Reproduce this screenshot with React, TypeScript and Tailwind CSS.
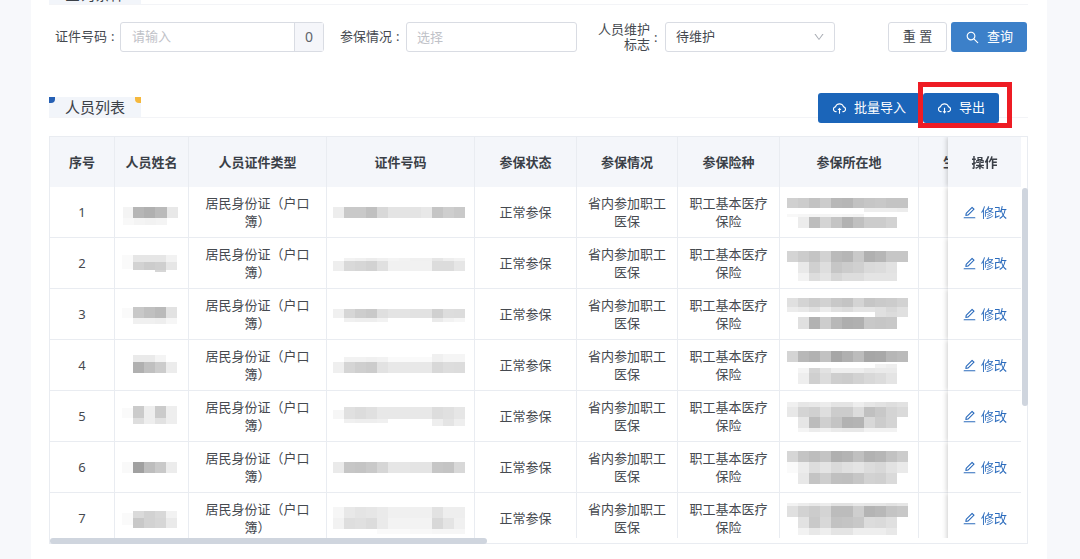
import type { ReactNode } from 'react'
import {
  AiOutlineCloudDownload,
  AiOutlineCloudUpload,
  AiOutlineDown,
  AiOutlineEdit,
  AiOutlineSearch,
} from 'react-icons/ai'

// x, y, height and the grey level of every 11px block
type Strip = [number, number, number, string]

interface Person {
  id: number
  name: Strip[]
  certNo: Strip[]
  area: Strip[]
}

const BLOCK = 11

const people: Person[] = [
  {
    id: 1,
    name: [[5, 17, 11, 'f4 b6 b0 ba e8'], [15, 17, 11, 'b6 b0 ba'], [5, 28, 7, 'f8 f4 f2 f4']],
    certNo: [[2, 17, 11, 'ed c9 c9 c0 d8 e4 e4 e4 e8 c5 ce c9']],
    area: [
      [5, 8, 10, 'd0 cc c2 cc b8 b6 c2 c6 c8 c4 c4'],
      [82, 18, 4, 'ee ee ee ec'],
      [5, 24, 3, 'f8 f6 f4 f4 f6 f4 f2'],
      [16, 27, 11, 'ec bd d4 c4 b2 c0 cc cc d2'],
    ],
  },
  {
    id: 2,
    name: [[4, 14, 14, 'fa'], [15, 14, 7, 'e6 e6 e6 f2'], [15, 21, 8, 'd2 cc cf e6'], [37, 29, 2, 'd6']],
    certNo: [
      [13, 17, 3, 'f2 f0 ec f0 f4 f2 f0 f0 e6 ee f2'],
      [2, 20, 10, 'ee d9 d6 d2 e0 f1 f1 f1 f1 dc dc e6'],
    ],
    area: [
      [5, 10, 11, 'd4 cc c4 d2 ba b6 c9 b0 b6 c6 c6'],
      [16, 21, 11, 'e9 d0 de c6 cc d0 da dc e2'],
      [16, 32, 8, 'f2 dd e4 d6 dd dd e4 e4 e4'],
    ],
  },
  {
    id: 3,
    name: [[4, 16, 10, 'fa'], [15, 15, 11, 'c8 c0 ba e2'], [15, 26, 6, 'f0 f0 ee f6']],
    certNo: [
      [2, 17, 9, 'f0 d6 cd c9 df e4 e4 e2 e2 d0 dd dc'],
      [13, 26, 4, 'f0 ee ee f2'],
      [101, 26, 4, 'ea f2 f6'],
    ],
    area: [
      [5, 6, 9, 'e0 d4 cc d2 c8 c4 d4 c6 ca cc d2'],
      [5, 15, 5, 'ec e8 e0 ec e0 dc e4 e4 e0 d8 e0'],
      [93, 20, 5, 'e0 dc e0'],
      [16, 25, 12, 'e0 b2 cd b8 ae b0 c8 c6 c8'],
    ],
  },
  {
    id: 4,
    name: [[15, 12, 7, 'ea ea f4'], [15, 19, 11, 'b0 c0 cc ec']],
    certNo: [
      [13, 14, 5, 'f2 f2 f0 f2 fa fa fa fa'],
      [101, 11, 8, 'f0 f5 f5'],
      [2, 19, 11, 'ef d5 cf cc e2 e8 e8 e8 e8 d8 dd dc'],
    ],
    area: [
      [5, 8, 11, 'd4 b8 b2 c2 a6 b0 bc a6 a8 b6 ba'],
      [93, 21, 5, 'f2 ee'],
      [16, 25, 5, 'f4 d4 e2 ee ee ee e8 ea ea'],
      [16, 30, 11, 'ee cf dc ce cc d2 d8 dc e4'],
    ],
  },
  {
    id: 5,
    name: [[4, 14, 10, 'fa'], [15, 12, 12, 'cb ee cb ee'], [15, 24, 6, 'de ee e2 ee']],
    certNo: [
      [2, 16, 9, 'f6'],
      [13, 13, 12, 'e0 dc e0 e8 e8 e8 e8 e8 dd e0 e6'],
      [13, 25, 4, 'f0 ee ee f0'],
      [101, 25, 7, 'ee e4 ee'],
    ],
    area: [
      [5, 8, 5, 'f0 e6 e8 ec e4 e4 ee e6 e2 de e2'],
      [5, 13, 10, 'e8 d4 d0 de cc cc dc c0 c8 d4 da'],
      [16, 23, 11, 'e6 bc cf c4 b2 b4 d8 cc d4'],
      [16, 34, 4, 'f4 ec f0 ea e8 e8 f2 f2 f2'],
    ],
  },
  {
    id: 6,
    name: [[4, 17, 11, 'f9'], [15, 17, 11, 'a0 bd c9 ec']],
    certNo: [[2, 17, 11, 'ea c6 c4 c9 d6 e6 e6 e4 e4 c6 c4 d8']],
    area: [
      [5, 6, 11, 'd6 c4 bd c4 b0 b4 c0 b2 b6 c2 cc'],
      [5, 17, 11, 'fa ec dd e4 da e0 e4 dc d8 e2 ea'],
      [16, 28, 11, 'e8 c4 ce c0 bf c6 d2 d0 da'],
    ],
  },
  {
    id: 7,
    name: [[4, 17, 12, 'fa'], [15, 15, 7, 'da d2 d8 f2'], [15, 22, 10, 'c8 d2 d6 ea']],
    certNo: [
      [2, 11, 11, 'f6 e8 e4 e6 ea f0 f0 f0 f0 e2 ee ee'],
      [2, 22, 11, 'f2 de e0 dc ea f3 f3 f3 f3 d8 e4 f0'],
      [46, 33, 5, 'fa fa fa f8 f8 f6 f6 f6'],
    ],
    area: [
      [5, 7, 3, 'f2 ec e8 ec e2 e2 e8 e6 e6 e2 e6'],
      [5, 10, 11, 'e0 d2 cc d4 bc bc ce b4 b8 c4 c8'],
      [16, 21, 11, 'e2 c9 d8 c2 c4 c8 dc da e0'],
      [16, 32, 7, 'f2 e8 ee e4 e4 ee ee ee e8'],
    ],
  },
]

function Mosaic({ width, strips }: { width: number; strips: Strip[] }) {
  return (
    <svg width={width} height={44} className="mx-auto block" shapeRendering="crispEdges" aria-hidden="true">
      {strips.map(([x, y, h, tones], s) =>
        tones.split(' ').map((tone, i) => (
          <rect key={`${s}-${i}`} x={x + i * BLOCK} y={y} width={BLOCK} height={h} fill={`#${tone}${tone}${tone}`} />
        ))
      )}
    </svg>
  )
}

function SectionTitle({ title, children }: { title: string; children?: ReactNode }) {
  return (
    <div className="flex h-[21px] items-start justify-between border-b border-[#f3f4f7]">
      <h2 className="relative h-5 bg-[#f2f5fa] px-4 text-[15px] leading-5 text-[#3c4148]">
        <span className="absolute top-0 left-0 size-[6px] rounded-br-[4px] bg-[#2660b4]" />
        {title}
        <span className="absolute top-0 right-0 size-[6px] rounded-bl-[4px] bg-[#f5b83d]" />
      </h2>
      {children}
    </div>
  )
}

const columns = ['序号', '人员姓名', '人员证件类型', '证件号码', '参保状态', '参保情况', '参保险种', '参保所在地']

const th = 'h-[50px] border-r border-[#e9ecf1] bg-[#f4f6fa] p-0 font-bold text-[#3a3f47]'
const td = 'h-[51px] border-r border-b border-[#e9ecf1] px-2 py-0 text-center'
// the clip keeps the shadow on the left side only, so rows leave no seams
const fixedCell = 'sticky right-0 p-0 text-center shadow-[-1px_0_5px_rgba(0,0,0,0.2)] [clip-path:inset(0_0_0_-10px)]'
const primaryButton = 'flex h-[30px] items-center gap-[7px] rounded-[3px] px-[14px] text-white'

function PersonTable() {
  return (
    <div className="relative mt-[18px] border border-[#e9ecf1]">
      <div className="mr-1.5 mb-[5px] h-[401px] overflow-hidden">
        <table className="w-full min-w-[1044px] table-fixed border-separate border-spacing-0 leading-[18px]">
          <colgroup>
            <col className="w-[65px]" />
            <col className="w-[74px]" />
            <col className="w-[138px]" />
            <col className="w-[148px]" />
            <col className="w-[102px]" />
            <col className="w-[101px]" />
            <col className="w-[102px]" />
            <col className="w-[139px]" />
            <col className="w-[102px]" />
            <col className="w-[73px]" />
          </colgroup>
          <thead>
            <tr>
              {columns.map((name) => (
                <th key={name} className={`${th} text-center`}>{name}</th>
              ))}
              <th className={`${th} text-left`}>
                <span className="ml-6">生</span>
              </th>
              <th className={`${fixedCell} bg-[#f4f6fa] font-bold text-[#3a3f47]`}>操作</th>
            </tr>
          </thead>
          <tbody>
            {people.map((person) => (
              <tr key={person.id}>
                <td className={td}>{person.id}</td>
                <td className="border-r border-b border-[#e9ecf1] p-0">
                  <Mosaic width={67} strips={person.name} />
                </td>
                <td className={td}>居民身份证（户口簿）</td>
                <td className="border-r border-b border-[#e9ecf1] p-0">
                  <Mosaic width={139} strips={person.certNo} />
                </td>
                <td className={td}>正常参保</td>
                <td className={td}>省内参加职工医保</td>
                <td className={td}>职工基本医疗保险</td>
                <td className="border-r border-b border-[#e9ecf1] p-0">
                  <Mosaic width={134} strips={person.area} />
                </td>
                <td className={td} />
                <td className={`${fixedCell} border-b border-[#e9ecf1] bg-white`}>
                  <a href="#edit" className="flex items-center justify-center gap-1 text-[#2c6cbd]">
                    <AiOutlineEdit className="size-[15px]" />
                    修改
                  </a>
                </td>
              </tr>
            ))}
          </tbody>
        </table>
      </div>
      <div className="absolute top-[51px] -right-px h-[218px] w-1.5 rounded-full bg-[#cfd5de]" />
      <div className="absolute -bottom-px left-0 h-1.5 w-[437px] rounded-full bg-[#cfd5de]" />
    </div>
  )
}

export default function App() {
  return (
    <div className="min-h-screen overflow-hidden bg-[#f7f8fb] pr-[33px] pl-[31px] font-['Noto_Sans','Noto_Sans_CJK_SC',sans-serif] text-[13px] text-[#45494f]">
      <main className="-mt-4 min-h-[calc(100vh+16px)] bg-white pr-[19px] pb-4 pl-[18px]">
        <SectionTitle title="查询条件" />

        <form className="mt-[17px] grid grid-cols-[minmax(0,269fr)_minmax(0,237fr)_minmax(0,242fr)_minmax(0,176fr)] items-center gap-x-4 pr-px pl-1.5">
          <div className="flex items-center">
            <label htmlFor="certNo" className="w-[65px] shrink-0">
              证件号码<span className="ml-1">:</span>
            </label>
            <div className="flex h-[30px] min-w-0 flex-1 rounded-[3px] border border-[#d9dce3]">
              <input id="certNo" placeholder="请输入" className="min-w-0 flex-1 px-[11px] outline-none placeholder:text-[#bfc2c8]" />
              <span className="w-[29px] border-l border-[#d9dce3] bg-[#f5f6fa] text-center text-[14px] leading-7 text-[#60646b]">0</span>
            </div>
          </div>

          <div className="flex items-center">
            <label htmlFor="status" className="w-[66px] shrink-0">
              参保情况<span className="ml-1">:</span>
            </label>
            <input id="status" placeholder="选择" className="h-[30px] min-w-0 flex-1 rounded-[3px] border border-[#d9dce3] px-[10px] outline-none placeholder:text-[#bfc2c8]" />
          </div>

          <div className="flex items-center">
            <label htmlFor="maintain" className="flex w-[72px] shrink-0 items-center pl-1 text-right leading-[15px]">
              <span className="w-[53px]">人员维护标志</span>
              <span className="ml-1">:</span>
            </label>
            <div className="relative min-w-0 flex-1">
              <select id="maintain" className="h-[30px] w-full appearance-none rounded-[3px] border border-[#d9dce3] bg-white px-[10px] outline-none">
                <option>待维护</option>
              </select>
              <AiOutlineDown className="pointer-events-none absolute top-[9px] right-[10px] size-3 text-[#a9adb4]" />
            </div>
          </div>

          <div className="flex justify-end gap-1">
            <button type="reset" className="h-[30px] w-[59px] rounded-[3px] border border-[#d9dce3] bg-white">
              重&nbsp;置
            </button>
            <button type="button" className={`${primaryButton} bg-[#3c80c9]`}>
              <AiOutlineSearch className="size-[15px]" />
              查询
            </button>
          </div>
        </form>

        <div className="mt-[45px]">
          <SectionTitle title="人员列表">
            <div className="-mt-1 mr-[29px] flex gap-[3px]">
              <button type="button" className={`${primaryButton} bg-[#1b65b9]`}>
                <AiOutlineCloudUpload className="size-[15px]" />
                批量导入
              </button>
              <div className="relative">
                <button type="button" className={`${primaryButton} bg-[#1b65b9]`}>
                  <AiOutlineCloudDownload className="size-[15px]" />
                  导出
                </button>
                <span className="pointer-events-none absolute -top-[11px] -left-[5px] h-[46px] w-[94px] border-5 border-[#ee1c24]" />
              </div>
            </div>
          </SectionTitle>
        </div>

        <PersonTable />
      </main>
    </div>
  )
}
